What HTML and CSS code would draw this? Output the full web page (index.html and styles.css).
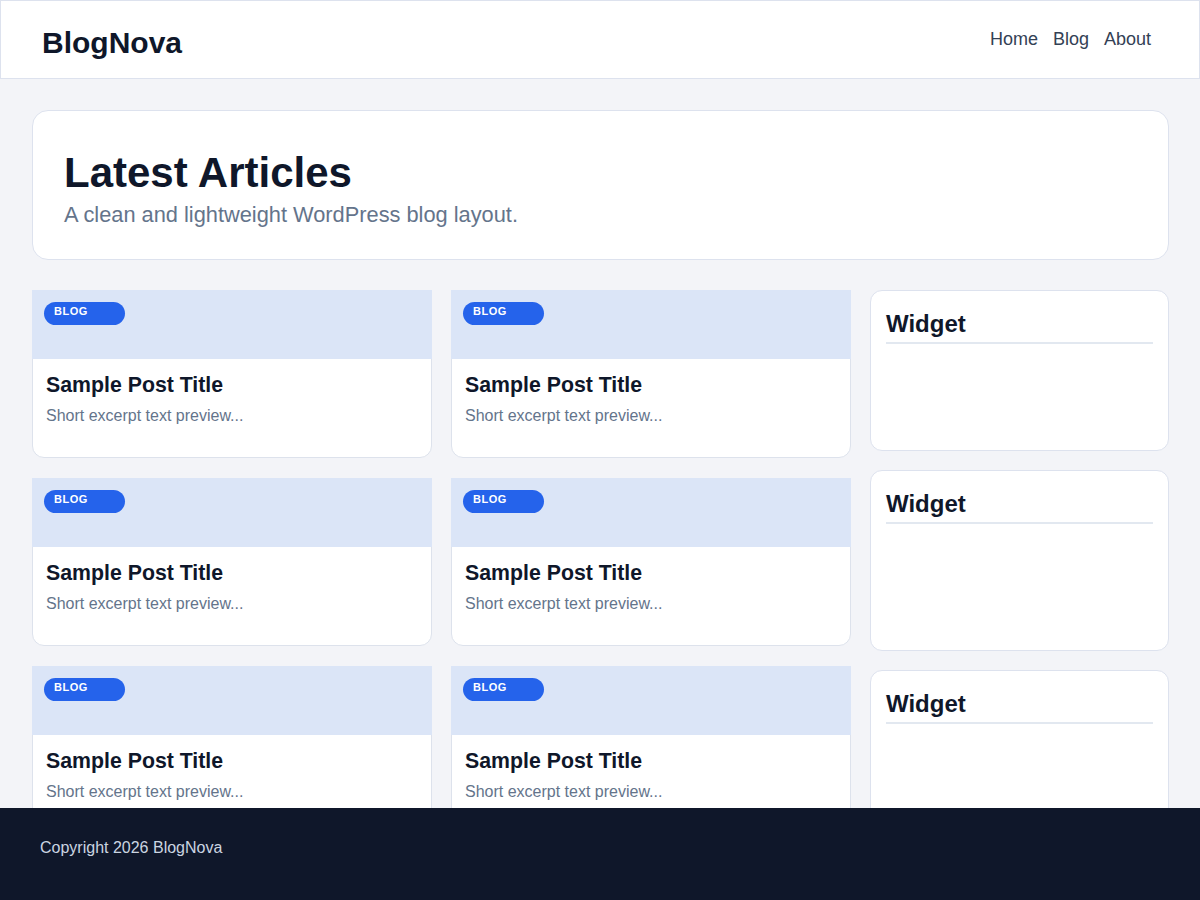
FILE: index.html
```html
<!DOCTYPE html>
<html lang="en">
<head>
<meta charset="utf-8">
<title>BlogNova</title>
<link rel="stylesheet" href="styles.css">
</head>
<body>
<header class="site-header">
  <div class="logo">BlogNova</div>
  <nav class="nav">
    <a href="#">Home</a>
    <a href="#">Blog</a>
    <a href="#">About</a>
  </nav>
</header>

<main class="container">
  <section class="hero">
    <h1 class="hero-title">Latest Articles</h1>
    <p class="hero-sub">A clean and lightweight WordPress blog layout.</p>
  </section>

  <div class="layout">
    <div class="posts">
      <article class="card"><div class="thumb"><span class="badge">BLOG</span></div><div class="card-body"><h2 class="card-title">Sample Post Title</h2><p class="excerpt">Short excerpt text preview...</p></div></article>
      <article class="card"><div class="thumb"><span class="badge">BLOG</span></div><div class="card-body"><h2 class="card-title">Sample Post Title</h2><p class="excerpt">Short excerpt text preview...</p></div></article>
      <article class="card"><div class="thumb"><span class="badge">BLOG</span></div><div class="card-body"><h2 class="card-title">Sample Post Title</h2><p class="excerpt">Short excerpt text preview...</p></div></article>
      <article class="card"><div class="thumb"><span class="badge">BLOG</span></div><div class="card-body"><h2 class="card-title">Sample Post Title</h2><p class="excerpt">Short excerpt text preview...</p></div></article>
      <article class="card"><div class="thumb"><span class="badge">BLOG</span></div><div class="card-body"><h2 class="card-title">Sample Post Title</h2><p class="excerpt">Short excerpt text preview...</p></div></article>
      <article class="card"><div class="thumb"><span class="badge">BLOG</span></div><div class="card-body"><h2 class="card-title">Sample Post Title</h2><p class="excerpt">Short excerpt text preview...</p></div></article>
    </div>
    <aside class="sidebar">
      <div class="widget widget-short"><h3 class="widget-title">Widget</h3></div>
      <div class="widget widget-tall"><h3 class="widget-title">Widget</h3></div>
      <div class="widget widget-tall"><h3 class="widget-title">Widget</h3></div>
    </aside>
  </div>
</main>

<footer class="site-footer">Copyright 2026 BlogNova</footer>
</body>
</html>
```

FILE: styles.css
```css
* { box-sizing: border-box; }

html, body {
  margin: 0;
  padding: 0;
}

body {
  background: #f3f4f8;
  font-family: "Liberation Sans", Arial, sans-serif;
  color: #0f172a;
}

.site-header {
  height: 79px;
  background: #ffffff;
  border: 1px solid #dde2ee;
  display: flex;
  justify-content: space-between;
  align-items: flex-start;
  padding: 24px 48px 0 41px;
}

.logo {
  font-size: 30px;
  font-weight: 700;
  line-height: 36px;
  color: #0f172a;
}

.nav {
  display: flex;
  gap: 15px;
  margin-top: 4px;
}

.nav a {
  font-size: 18px;
  line-height: 21px;
  color: #334155;
  text-decoration: none;
}

.container {
  padding: 31px 31px 140px 32px;
}

.hero {
  background: #ffffff;
  border: 1px solid #dde2ee;
  border-radius: 16px;
  padding: 38px 31px 29px;
  margin-bottom: 30px;
}

.hero-title {
  margin: 0;
  font-size: 42px;
  line-height: 48px;
  font-weight: 700;
  color: #0f172a;
}

.hero-sub {
  margin: 3px 0 0;
  font-size: 21.8px;
  line-height: 30px;
  color: #64748b;
}

.layout {
  display: grid;
  grid-template-columns: 819px 1fr;
  column-gap: 19px;
  align-items: start;
}

.posts {
  display: grid;
  grid-template-columns: 400px 400px;
  column-gap: 19px;
  row-gap: 20px;
}

.card {
  background: #ffffff;
  border: 1px solid #dde2ec;
  border-radius: 12px;
  height: 168px;
}

.thumb {
  position: relative;
  height: 69px;
  margin: -1px -1px 0;
  background: #dbe5f7;
}

.badge {
  position: absolute;
  top: 12px;
  left: 12px;
  width: 81px;
  height: 23px;
  padding: 3px 10px;
  border-radius: 12px;
  background: #2563eb;
  color: #ffffff;
  font-size: 11px;
  line-height: 13px;
  font-weight: 700;
  letter-spacing: 0.5px;
}

.card-body {
  padding: 13px 13px 0;
}

.card-title {
  margin: 0 0 6px;
  font-size: 21.3px;
  line-height: 26px;
  font-weight: 700;
  color: #0f172a;
}

.excerpt {
  margin: 0;
  font-size: 16px;
  line-height: 24px;
  color: #64748b;
}

.sidebar {
  display: flex;
  flex-direction: column;
  gap: 19px;
}

.widget {
  background: #ffffff;
  border: 1px solid #dde2ee;
  border-radius: 12px;
  padding: 19px 15px 15px;
}

.widget-short { height: 161px; }
.widget-tall { height: 181px; }

.widget-title {
  margin: 0;
  font-size: 24px;
  line-height: 28px;
  font-weight: 700;
  color: #0f172a;
  padding-bottom: 4px;
  border-bottom: 2px solid #e2e8f0;
}

.site-footer {
  position: fixed;
  left: 0;
  right: 0;
  bottom: 0;
  height: 92px;
  background: #0f172a;
  color: #cbd5e1;
  font-size: 16px;
  line-height: 19px;
  padding: 30px 40px;
}
```
